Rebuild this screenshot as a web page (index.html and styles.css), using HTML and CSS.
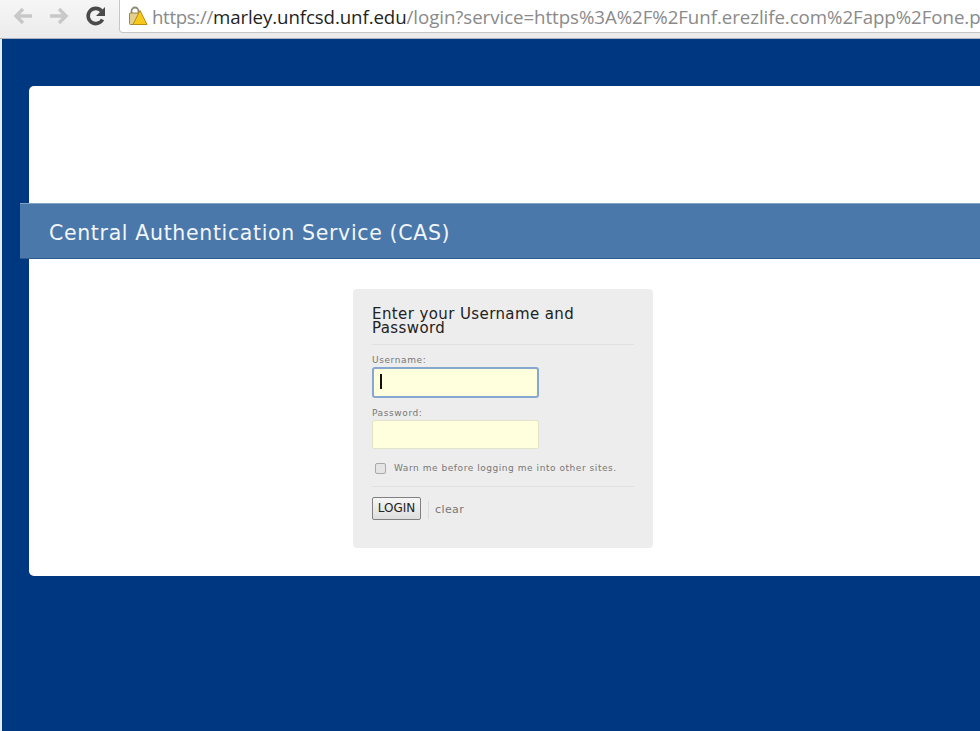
FILE: index.html
```html
<!DOCTYPE html>
<html lang="en">
<head>
<meta charset="utf-8">
<title>Central Authentication Service (CAS)</title>
<link rel="stylesheet" href="styles.css">
</head>
<body>
<header class="toolbar">
  <svg class="nav-icon back" width="24" height="24" viewBox="0 0 24 24"><path d="M21 12H6M12 5l-7 7 7 7" fill="none" stroke="#c8c8c8" stroke-width="3.4"/></svg>
  <svg class="nav-icon forward" width="24" height="24" viewBox="0 0 24 24"><path d="M3 12h15M12 5l7 7-7 7" fill="none" stroke="#c8c8c8" stroke-width="3.4"/></svg>
  <svg class="nav-icon reload" width="24" height="24" viewBox="0 0 24 24"><path d="M18.5 15.500A7.600 7.600 0 1 1 17.500 7" fill="none" stroke="#4a4a4a" stroke-width="3.600"/><path d="M21 3v9h-9z" fill="#4a4a4a"/></svg>
  <div class="omnibox">
    <svg class="lock" width="20" height="20" viewBox="0 0 20 20">
      <path d="M3.500 8V5a3.500 3.500 0 0 1 7 0v3" fill="none" stroke="#8f8a78" stroke-width="1.800"/>
      <rect x="1.500" y="7" width="12" height="11.500" rx="1" fill="#e3cf8e" stroke="#97834c"/>
      <path d="M12 4.500l7 14H5z" fill="#f7c81e" stroke="#b98f12" stroke-linejoin="round"/>
    </svg>
    <span class="url"><span class="url-scheme">https://</span><span class="url-host">marley.unfcsd.unf.edu</span><span class="url-muted">/login?service=https%3A%2F%2Funf.erezlife.com%2Fapp%2Fone.php</span></span>
  </div>
</header>
<main class="page">
  <section class="card">
    <h1 class="banner">Central Authentication Service (CAS)</h1>
    <form class="login">
      <h2 class="login-title">Enter your Username and Password</h2>
      <label class="field-label" for="username">Username:</label>
      <div class="input focused" id="username"><span class="caret"></span></div>
      <label class="field-label" for="password">Password:</label>
      <div class="input" id="password"></div>
      <div class="warn">
        <span class="checkbox"></span>
        <span class="warn-text">Warn me before logging me into other sites.</span>
      </div>
      <div class="actions">
        <span class="login-button">LOGIN</span>
        <span class="clear">clear</span>
      </div>
    </form>
  </section>
</main>
</body>
</html>
```

FILE: styles.css
```css
* { box-sizing: border-box; }
html, body { margin: 0; height: 100%; overflow: hidden; }
body { width: 980px; height: 731px; background: #e4ecf4; font-family: "DejaVu Sans", sans-serif; }

.toolbar {
  height: 39px;
  display: flex;
  align-items: flex-start;
  background: linear-gradient(#f6f6f6, #ebebeb);
  border-bottom: 1px solid #a9b2bd;
  overflow: hidden;
}
.nav-icon { flex: none; margin-top: 4px; }
.back { margin-left: 11px; }
.forward { margin-left: 12px; }
.reload { margin-left: 13px; }
.omnibox {
  flex: none;
  width: 900px;
  height: 33px;
  margin-left: 11px;
  padding-left: 8px;
  display: flex;
  align-items: center;
  gap: 4px;
  background: #fff;
  border: 1px solid #c6c6c6;
  border-top: 0;
  border-radius: 0 0 0 4px;
}
.lock { flex: none; }
.url { font: 18.700px "Open Sans", sans-serif; white-space: nowrap; letter-spacing: -0.1px; }
.url-scheme { color: #8a8a8a; letter-spacing: -0.350px; }
.url-muted { color: #8a8a8a; letter-spacing: -0.060px; }
.url-host { color: #1f1f1f; }

.page {
  height: 692px;
  margin-left: 2px;
  padding-top: 47px;
  padding-left: 27px;
  background: #003781;
  overflow: hidden;
}
.card {
  width: 1000px;
  height: 490px;
  padding-top: 117px;
  background: #fff;
  border-radius: 5px;
}
.banner {
  width: 1010px;
  height: 56px;
  margin: 0 0 30px -9px;
  padding: 0 0 0 29px;
  background: #4a78aa;
  border-top: 1px solid #7fa3c6;
  border-bottom: 1px solid #2f5b8e;
  color: #f2f6f9;
  font-size: 20.500px;
  font-weight: 400;
  letter-spacing: 0.650px;
  line-height: 58px;
}
.login {
  width: 300px;
  height: 259px;
  margin-left: 324px;
  padding: 18px 19px 0;
  background: #ededed;
  border-radius: 4px;
}
.login-title {
  margin: 0 0 1px;
  padding-bottom: 9px;
  border-bottom: 1px solid #e0e0e0;
  color: #222;
  font-size: 15px;
  font-weight: 400;
  letter-spacing: 0.400px;
  line-height: 14px;
}
.field-label {
  display: block;
  margin-top: 7px;
  height: 14px;
  color: #777;
  font-size: 9px;
  letter-spacing: 0.600px;
  line-height: 17px;
}
.input {
  width: 167px;
  height: 29px;
  margin-top: 1px;
  background: #ffffdd;
  border: 1px solid #e3e3cc;
  border-radius: 2px;
}
.input.focused {
  height: 31px;
  padding: 5px 6px;
  border: 2px solid #86a7d0;
  border-radius: 3px;
}
.caret { display: block; width: 2px; height: 15px; background: #111; }
.warn {
  display: flex;
  align-items: center;
  height: 14px;
  margin-top: 12px;
  padding-left: 3px;
}
.checkbox {
  width: 11px;
  height: 11px;
  margin-right: 8px;
  background: #e4e4e4;
  border: 1px solid #a9a9a9;
  border-radius: 2px;
}
.warn-text { color: #777; font-size: 9px; letter-spacing: 0.550px; white-space: nowrap; }
.actions {
  display: flex;
  align-items: center;
  margin-top: 11px;
  padding-top: 10px;
  border-top: 1px solid #e0e0e0;
}
.login-button {
  width: 49px;
  height: 23px;
  background: linear-gradient(#f6f6f6, #dedede);
  border: 1px solid #808080;
  border-radius: 2px;
  color: #222;
  font: 12px/21px "DejaVu Sans", sans-serif;
  text-align: center;
}
.clear {
  margin-left: 7px;
  margin-top: 2px;
  padding-left: 6px;
  border-left: 1px solid #dcdcdc;
  color: #777;
  font-size: 11px;
  letter-spacing: 0.400px;
  line-height: 18px;
}
```
